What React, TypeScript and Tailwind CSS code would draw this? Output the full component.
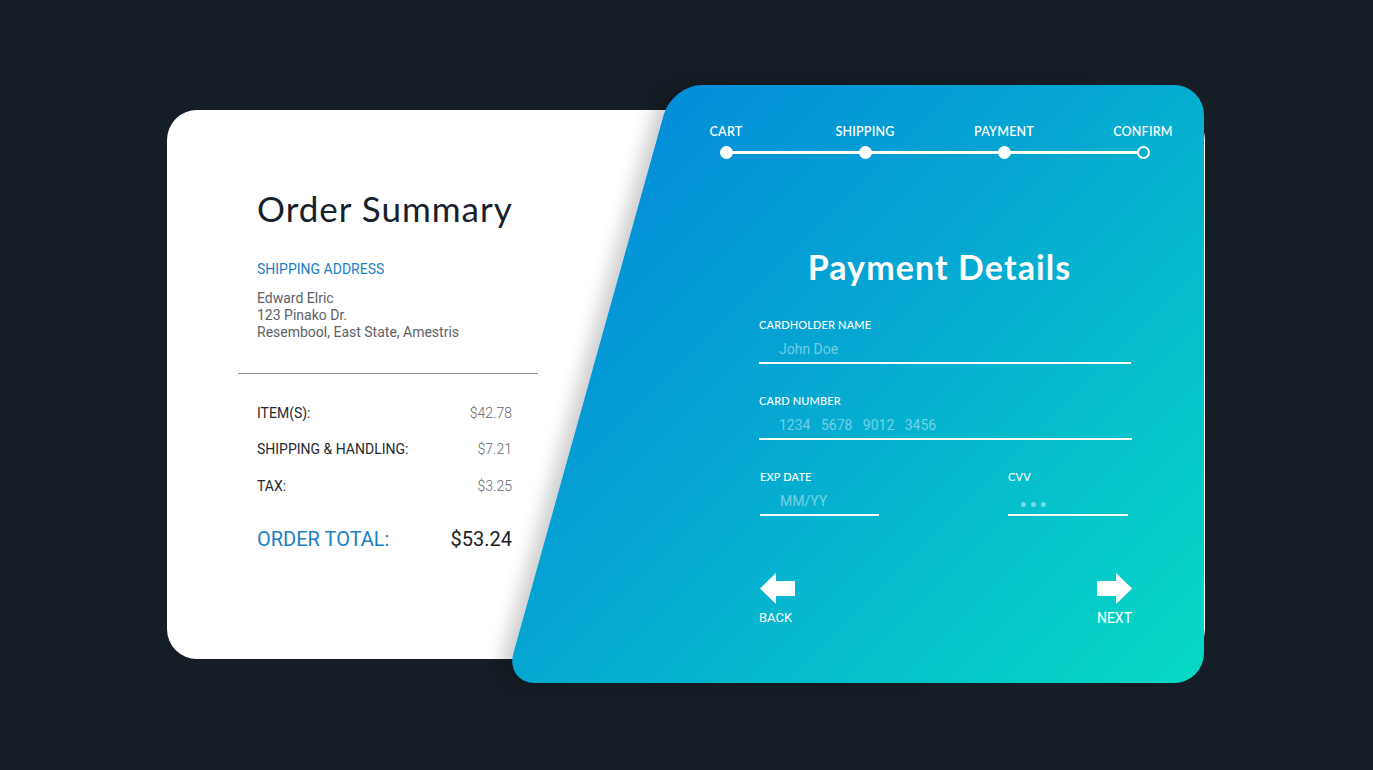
import React from "react";

const grad = "bg-[linear-gradient(135deg,#0384dc_0%,#05a6d2_45%,#07dac5_100%)]";

function Step({ label, hollow }: { label: string; hollow?: boolean }) {
  return (
    <div className="flex flex-col items-center">
      <div className="text-[12.5px] leading-[16px] text-white font-['Lato',sans-serif] font-semibold tracking-[0.2px]">{label}</div>
      <div
        className={
          hollow
            ? "mt-[5.5px] w-[13px] h-[13px] rounded-full border-[2.5px] border-white relative z-10"
            : "mt-[5.5px] w-[13px] h-[13px] rounded-full bg-white relative z-10"
        }
      />
    </div>
  );
}

function Field({ label, placeholder, width, dots }: { label: string; placeholder?: string; width: string; dots?: boolean }) {
  return (
    <div className={width}>
      <div className="text-[11px] leading-[14px] text-white font-['Lato',sans-serif] font-medium tracking-[0.15px]">{label}</div>
      {dots ? (
        <div className="mt-[7px] h-[20px] pl-[13px] flex items-center gap-[5px] pt-[6px]">
          <span className="w-[5px] h-[5px] rounded-full bg-white/45" />
          <span className="w-[5px] h-[5px] rounded-full bg-white/45" />
          <span className="w-[5px] h-[5px] rounded-full bg-white/45" />
        </div>
      ) : (
        <div className="mt-[7px] h-[20px] leading-[20px] pl-[20px] text-[14px] text-white/45 font-['Roboto',sans-serif] whitespace-pre">{placeholder}</div>
      )}
      <div className="mt-[3px] h-[2px] bg-white" />
    </div>
  );
}

function Row({ label, value }: { label: string; value: string }) {
  return (
    <div className="flex justify-between items-center h-[20px] font-['Roboto',sans-serif] text-[14px]">
      <span className="text-[#262a30]">{label}</span>
      <span className="text-[#5f646b] font-light">{value}</span>
    </div>
  );
}

export default function App() {
  return (
    <div className="w-full h-[770px] bg-[#151d26] overflow-hidden">
      <div className="relative ml-[167px] pt-[85px] w-[1038px]">
        {/* White order summary card */}
        <div className="mt-[25px] h-[549px] w-[1038px] rounded-[30px] bg-white">
          <div className="ml-[90px] w-[255px] pt-[78px]">
            <h1 className="text-[35px] leading-[40px] text-[#17202b] font-['Lato',sans-serif] tracking-[1px] whitespace-nowrap">Order Summary</h1>
            <div className="mt-[31px] text-[14px] leading-[20px] text-[#1b7fc3] font-['Roboto',sans-serif]">SHIPPING ADDRESS</div>
            <div className="mt-[10.5px] text-[14px] leading-[17px] text-[#5d6168] font-['Roboto',sans-serif]">
              <div>Edward Elric</div>
              <div>123 Pinako Dr.</div>
              <div>Resembool, East State, Amestris</div>
            </div>
            <div className="mt-[32px] -ml-[19px] w-[300px] h-[1.5px] bg-[#8e939a]" />
            <div className="mt-[29px] flex flex-col gap-[16.5px]">
              <Row label="ITEM(S):" value="$42.78" />
              <Row label="SHIPPING & HANDLING:" value="$7.21" />
              <Row label="TAX:" value="$3.25" />
            </div>
            <div className="mt-[29px] flex justify-between items-center h-[28px] font-['Roboto',sans-serif] text-[20px]">
              <span className="text-[#1b7fc3]">ORDER TOTAL:</span>
              <span className="text-[#1c2027]">$53.24</span>
            </div>
          </div>
        </div>

        {/* Blue payment panel */}
        <div className="absolute left-[345px] top-[85px] w-[692px] h-[598px]">
          {/* slanted left part */}
          <div className="absolute left-[-7px] top-0 w-[420px] h-[598px] origin-bottom-left skew-x-[-15.6deg] rounded-l-[30px] overflow-hidden shadow-[-10px_0_18px_rgba(0,0,0,0.2)]">
            <div className={"absolute left-[7px] top-0 w-[692px] h-[598px] origin-bottom-left skew-x-[15.6deg] " + grad} />
          </div>
          {/* straight right part */}
          <div className="absolute left-[300px] top-0 w-[392px] h-[598px] rounded-r-[30px] overflow-hidden">
            <div className={"absolute left-[-300px] top-0 w-[692px] h-[598px] " + grad} />
          </div>

          {/* content */}
          <div className="relative">
            {/* stepper */}
            <div className="relative ml-[144.5px] w-[556px] pt-[39px]">
              <div className="absolute left-[69.5px] right-[76px] top-[66px] h-[3px] bg-white" />
              <div className="grid grid-cols-4">
                <Step label="CART" />
                <Step label="SHIPPING" />
                <Step label="PAYMENT" />
                <Step label="CONFIRM" hollow />
              </div>
            </div>

            <div className="ml-[247px] w-[373px]">
              <h2 className="mt-[89.5px] text-center pr-[12px] text-[34px] leading-[38px] text-white font-bold font-['Lato',sans-serif] tracking-[1.1px] whitespace-nowrap">
                Payment Details
              </h2>
              <div className="mt-[32px]">
                <Field label="CARDHOLDER NAME" placeholder="John Doe" width="w-[372px]" />
              </div>
              <div className="mt-[30px]">
                <Field label="CARD NUMBER" placeholder={"1234   5678   9012   3456"} width="w-[373px]" />
              </div>
              <div className="mt-[30px] flex justify-between pr-[4px]">
                <div className="ml-[1px]">
                  <Field label="EXP DATE" placeholder="MM/YY" width="w-[119px]" />
                </div>
                <Field label="CVV" width="w-[120px]" dots />
              </div>

              <div className="mt-[57px] flex justify-between">
                <div className="flex flex-col items-start">
                  <svg width="35" height="31" viewBox="0 0 35 31" className="ml-[1px]">
                    <polygon points="0,15.5 16,0 16,8 35,8 35,23 16,23 16,31" fill="#fff" />
                  </svg>
                  <div className="mt-[7px] text-[13px] leading-[14px] text-white font-['Roboto',sans-serif]">BACK</div>
                </div>
                <div className="flex flex-col items-end">
                  <svg width="35" height="31" viewBox="0 0 35 31">
                    <polygon points="35,15.5 19,0 19,8 0,8 0,23 19,23 19,31" fill="#fff" />
                  </svg>
                  <div className="mt-[7px] text-[14px] leading-[14px] text-white font-['Roboto',sans-serif]">NEXT</div>
                </div>
              </div>
            </div>
          </div>
        </div>
      </div>
    </div>
  );
}
